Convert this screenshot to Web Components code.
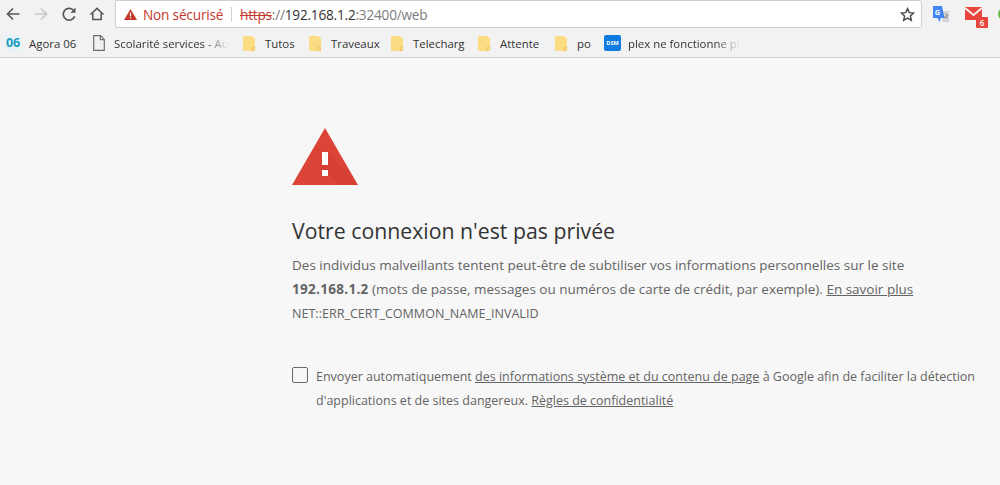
<!DOCTYPE html>
<html lang="fr"><head><meta charset="utf-8"><title>Non sécurisé</title>
<style>
html,body{margin:0;padding:0;width:1000px;height:485px;overflow:hidden;background:#f7f7f7;font-family:"Open Sans","Noto Sans",sans-serif}
</style></head><body>
<browser-toolbar></browser-toolbar>
<bookmark-bar>
  <bookmark-item icon="agora" w="88">Agora 06</bookmark-item>
  <bookmark-item icon="page" w="150" fade>Scolarité services - Au</bookmark-item>
  <bookmark-item icon="folder" w="66">Tutos</bookmark-item>
  <bookmark-item icon="folder" w="82">Traveaux</bookmark-item>
  <bookmark-item icon="folder" w="87">Telecharg</bookmark-item>
  <bookmark-item icon="folder" w="77">Attente</bookmark-item>
  <bookmark-item icon="folder" w="49">po</bookmark-item>
  <bookmark-item icon="dsm" w="150" fade>plex ne fonctionne pl</bookmark-item>
</bookmark-bar>
<warning-page></warning-page>
<script>
const def=(n,html)=>{customElements.define(n,class extends HTMLElement{constructor(){super();const s=this.attachShadow({mode:'open'});s.innerHTML=typeof html==='function'?html(this):html;}})};

def('browser-toolbar',`<style>
:host{display:flex;align-items:flex-start;height:29px;background:#f2f2f2;box-sizing:border-box;color:#333}
svg{display:block;flex:none}
.nav{display:flex;align-items:center;gap:12px;padding-left:5px;width:115px;height:28px;box-sizing:border-box;flex:none}
.omni{flex:none;width:807px;height:28px;box-sizing:border-box;background:#fff;border:1px solid #cfcfcf;border-radius:2px;display:flex;align-items:center;white-space:nowrap}
.sec{color:#c5392d;display:flex;align-items:center;gap:6px;padding-left:8px;width:107px;flex:none;font-size:13.6px;letter-spacing:-.17px}
.sep{width:1px;height:15px;background:#d0d0d0;margin:0 8px 0 0;flex:none}
.url{flex:1;color:#333;font-size:13.6px;letter-spacing:-.2px}
.url s{color:#c5392d;text-decoration-thickness:1px}
.url i{font-style:normal;color:#7d7d7d}
.star{margin-right:6px}
.g{margin:6px 0 0 10px}
.mail{position:relative;flex:none;margin:7px 0 0 16px;width:23px;height:21px}
.mail svg{position:absolute;left:0;top:0}
.mail span{position:absolute;left:11px;top:10px;width:12px;height:11px;background:#e8453c;color:#fff;font-size:8px;line-height:11px;text-align:center;border-radius:1px;font-weight:600}
.dot{margin:8px 0 0 10px;width:12px;height:12px;border-radius:50%;background:#67b648;flex:none}
</style>
<div class="nav">
<svg width="16" height="16" viewBox="0 0 16 16" fill="none" stroke="#5a5a5a" stroke-width="1.700"><path d="M14.500 8H2.500M8 2.500 2.500 8 8 13.500"/></svg>
<svg width="16" height="16" viewBox="0 0 16 16" fill="none" stroke="#c9c9c9" stroke-width="1.700"><path d="M1.500 8h12M8 2.500 13.500 8 8 13.500"/></svg>
<svg width="16" height="16" viewBox="0 0 16 16" fill="none" stroke="#555" stroke-width="1.700"><path d="M13.700 10.200A5.900 5.900 0 1 1 12.300 4"/><path d="M14.500 1.600v5.100H9.400z" fill="#555" stroke="none"/></svg>
<svg width="16" height="16" viewBox="0 0 16 16" fill="none" stroke="#555" stroke-width="1.500"><path d="M1.500 8.500 8 2.400l6.500 6.100M3.800 7.300v6.300h8.400V7.300"/></svg>
</div>
<div class="omni">
<div class="sec"><svg width="13" height="11" viewBox="0 0 13 11"><path d="M6.500 0 13 11H0z" fill="#c5392d"/><path d="M5.900 3.500h1.200v3.700H5.900zM5.900 8h1.200v1.300H5.900z" fill="#fff"/></svg><span>Non sécurisé</span></div>
<div class="sep"></div>
<div class="url"><s>https</s><i>://</i>192.168.1.2<i>:32400/web</i></div>
<svg class="star" width="15" height="15" viewBox="0 0 16 16" fill="none" stroke="#444" stroke-width="1.500"><path d="M8 1.700l1.900 4.300 4.700.5-3.500 3.100 1 4.600L8 11.900l-4.100 2.300 1-4.600L1.400 6.500l4.700-.5z"/></svg>
</div>
<svg class="g" width="17" height="17" viewBox="0 0 17 17"><path d="M9 5h8v11h-6z" fill="#cfd3d6"/><path d="M1 0h9l2.500 12H8.500L8 16 5.300 12H1z" fill="#4285f4"/><text x="2.800" y="9" font-family="Open Sans" font-size="7.500" font-weight="700" fill="#fff">G</text><path d="M13.500 7.500l.7 1.500 1.600.2-1.200 1 .4 1.600-1.500-.9-1.500.9" fill="none" stroke="#777" stroke-width=".8"/></svg>
<div class="mail">
<svg width="17" height="13" viewBox="0 0 17 13"><path d="M0 0h17v13H0z" fill="#e8453c"/><path d="M0 1 8.500 8 17 1" fill="none" stroke="#f7f0ee" stroke-width="2"/></svg>
<span>6</span>
</div>
<div class="dot"></div>`);

const icons={
agora:[24,`<span style="display:block;width:16px;height:16px;background:#e8f3f7;color:#1b9bc0;font-weight:700;font-size:12.500px;line-height:16px;text-align:center;letter-spacing:-.2px">06</span>`],
page:[21,`<svg width="12" height="16" viewBox="0 0 12 16" fill="none" stroke="#6e6e6e" stroke-width="1.200"><path d="M.7 .7h7l3.600 3.700v10.900H.7zM7.300 .7v4h4"/></svg>`],
folder:[22,`<svg width="12" height="15" viewBox="0 0 12 15"><path d="M1 0h8l3 2.500V15H1a1 1 0 0 1-1-1V1a1 1 0 0 1 1-1z" fill="#fbdc83"/><path d="M9.300 11.200H12V15H9.300z" fill="none" stroke="#e9bb4e" stroke-width=".7"/></svg>`],
dsm:[24,`<span style="display:block;width:17px;height:16px;background:#0d7be0;border-radius:2px;color:#fff;font-weight:700;font-size:5.500px;line-height:16px;text-align:center">DSM</span>`]
};
def('bookmark-bar',`<style>:host{display:flex;align-items:center;height:29px;box-sizing:border-box;background:#f2f2f2;border-bottom:1px solid #d5d5d5;padding-left:5px}</style><slot></slot>`);
def('bookmark-item',el=>{const ic=icons[el.getAttribute('icon')];return `<style>
:host{display:flex;align-items:center;height:28px;box-sizing:border-box;flex:none;font-size:11.400px;color:#333;white-space:nowrap;width:${el.getAttribute('w')}px}
.i{flex:none;width:${ic[0]}px}
.t{display:block;${el.hasAttribute('fade')?'-webkit-mask-image:linear-gradient(90deg,#000 78%,transparent 100%);mask-image:linear-gradient(90deg,#000 78%,transparent 100%);':''}}
svg{display:block}
</style><div class="i">${ic[1]}</div><div class="t"><slot></slot></div>`});

def('warning-page',`<style>
:host{display:block;padding:70px 0 0 292px;color:#646464;font-size:13.500px;line-height:24px;white-space:nowrap}
svg{display:block}
h1{margin:31px 0 0;font-weight:400;font-size:21.270px;line-height:30px;color:#333}
.p{margin-top:7px}
a{color:inherit;text-decoration:underline}
b{font-weight:700;letter-spacing:.3px}
.code{font-size:12.560px}
.opt{display:flex;margin-top:39px}
.box{width:16px;height:16px;box-sizing:border-box;border:1.500px solid #6a6a6a;border-radius:2px;flex:none;margin:2px 8px 0 0}
.lbl{font-size:12.500px}
</style>
<svg width="66" height="57" viewBox="0 0 66 57"><path d="M33 0 66 57H0z" fill="#dd4438"/><path d="M36 24 66 57H48L30 39z" fill="#a52714" opacity=".12"/><path d="M30 24h6v13h-6zM30 42h6v6h-6z" fill="#fff"/></svg>
<h1>Votre connexion n'est pas privée</h1>
<div class="p">Des individus malveillants tentent peut-être de subtiliser vos informations personnelles sur le site<br><b>192.168.1.2</b> (mots de passe, messages ou numéros de carte de crédit, par exemple). <a href="#">En savoir plus</a><br><span class="code">NET::ERR_CERT_COMMON_NAME_INVALID</span></div>
<div class="opt"><div class="box"></div><div class="lbl">Envoyer automatiquement <a href="#">des informations système et du contenu de page</a> à Google afin de faciliter la détection<br>d'applications et de sites dangereux. <a href="#">Règles de confidentialité</a></div></div>`);
</script>
</body></html>
